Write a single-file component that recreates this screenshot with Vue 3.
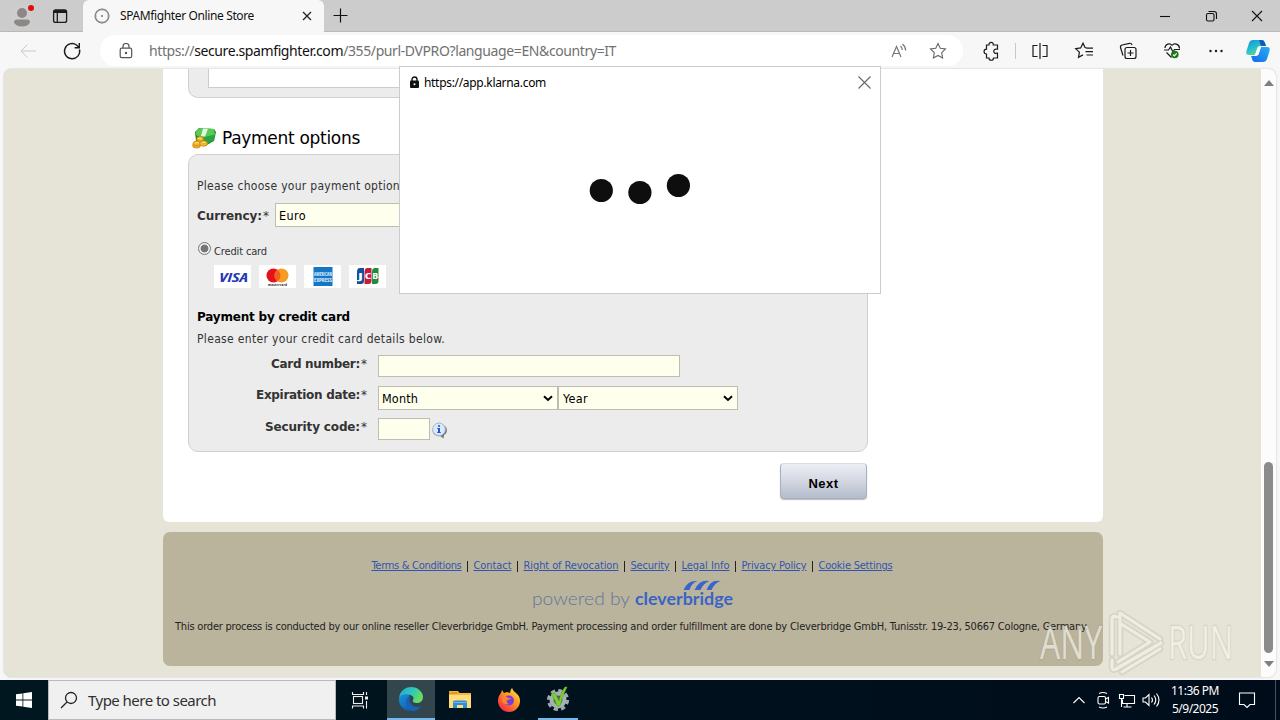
<script setup>
// Spreads a label over a fixed advance width (px) by adjusting its letter spacing.
const vFit = {
  mounted(el, { value }) {
    const natural = el.getBoundingClientRect().width
    el.style.letterSpacing = (value - natural) / el.textContent.length + 'px'
  },
}
const links = [
  ['Terms & Conditions', 90],
  ['Contact', 38],
  ['Right of Revocation', 95],
  ['Security', 39],
  ['Legal Info', 48],
  ['Privacy Policy', 65],
  ['Cookie Settings', 74],
]
</script>

<template>
  <div class="desktop">
    <header class="tabs">
      <div class="profile">
        <svg width="44" height="32" viewBox="0 0 44 32">
          <circle cx="22" cy="17" r="11" fill="#d0cecd" />
          <circle cx="22" cy="13" r="5" fill="#8b8887" />
          <path d="M14 22.500q0-3 3-3h10q3 0 3 3-2 4-8 4t-8-4z" fill="#8b8887" />
          <circle cx="31" cy="8" r="3" fill="#e00b0b" />
        </svg>
      </div>
      <svg class="tabact" width="32" height="32" viewBox="0 0 32 32" fill="none" stroke="#1b1b1b" stroke-width="1.300">
        <rect x="9.600" y="10" width="13" height="12.400" rx="2" />
        <path d="M10 11.500h12.500" stroke-width="3" /><path d="M13.300 12v10" />
      </svg>
      <div class="tab">
        <svg width="18" height="18" viewBox="0 0 18 18" fill="none">
          <circle cx="9" cy="9" r="6.800" stroke="#858585" stroke-width="1.500" />
          <path d="M9 1v3M9 14v3M1 9h3M14 9h3" stroke="#aaa" /><circle cx="9" cy="9" r=".9" fill="#666" />
        </svg>
        <span class="title"><span v-fit="134" class="t">SPAMfighter Online Store</span></span>
        <svg class="x" width="10" height="10" viewBox="0 0 10 10" stroke="#222" stroke-width="1.300"><path d="M1 1l8 8M9 1l-8 8" /></svg>
      </div>
      <svg class="plus" width="32" height="32" viewBox="0 0 32 32" stroke="#111" stroke-width="1.200"><path d="M9.500 15.500h14M16.500 8.500v14" /></svg>
      <div class="win">
        <svg viewBox="0 0 46 32"><path d="M18 16.500h10" /></svg>
        <svg viewBox="0 0 46 32"><rect x="18.500" y="13.500" width="7.500" height="7.500" rx="1.500" /><path d="M20.500 11.500h5.500q2.500 0 2.500 2.500v5" /></svg>
        <svg viewBox="0 0 46 32"><path d="M18 11l10 10M28 11l-10 10" /></svg>
      </div>
    </header>

    <nav class="bar">
      <div class="navbtns">
        <svg width="18" height="18" viewBox="0 0 18 18" stroke="#c9c9c9"><path d="M17 9H2M8.500 2.500L2 9l6.500 6.500" /></svg>
        <svg width="20" height="20" viewBox="0 0 20 20" stroke="#1b1b1b" stroke-width="1.400"><path d="M17.500 8.500A7.600 7.600 0 1 1 14.500 4L17 6.500M17.300 2v4.700h-4.700" /></svg>
      </div>
      <div class="address">
        <svg width="14" height="16" viewBox="0 0 14 16" stroke="#555" stroke-width="1.200"><rect x="1.200" y="5.200" width="11.500" height="9.500" rx="1.500" /><path d="M4 5V3.500a3 3 0 0 1 6 0V5" /><circle cx="7" cy="10" r=".6" fill="#555" /></svg>
        <span class="url"><span v-fit="467" class="t">https://<b>secure.spamfighter.com</b>/355/purl-DVPRO?language=EN&amp;country=IT</span></span>
        <svg width="18" height="18" viewBox="0 0 18 18" stroke="#777" stroke-width="1.200"><path d="M2 15L6.500 4.500 11 15M3.600 11.500h6M10.500 4q1.700 1.500 1.800 4M12.500 2q3 2.500 3.200 6.500" /></svg>
        <svg class="fav" width="18" height="18" viewBox="0 0 18 18" stroke="#666" stroke-width="1.100"><path d="M9 1.500l2.300 4.800 5.200.7-3.800 3.700.9 5.300L9 13.500 4.400 16l.9-5.300L1.500 7l5.200-.7z" /></svg>
      </div>
      <div class="tools">
        <svg viewBox="0 0 44 36"><path d="M17.500 12H20a2.200 2.200 0 1 1 4.300 0H28.500v4.200h-1a2.100 2.100 0 1 0 0 4h1V25H24.500a2.200 2.200 0 0 1-4.500 0H17.500v-4a2.400 2.400 0 1 1 0-4.900z" /></svg>
        <i class="sep"></i>
        <svg viewBox="0 0 44 36"><path d="M19.500 12.500H15v11h4.500M24.500 12.500H29v11h-4.500M22 10v16" /></svg>
        <svg viewBox="0 0 44 36"><path d="M24.500 14.800l-1.500-.3-2-4.300-2.300 4.700-5 .7 3.700 3.500-.9 5.200 4.500-2.400M24.500 15.200h6.500M23.500 18.600H31M24.500 22h6.500" /></svg>
        <svg viewBox="0 0 44 36"><rect x="19" y="14.500" width="11" height="11" rx="2" /><path d="M24.500 17v6M21.500 20h6M17 22.500l-2.500-8q-.4-2 1.500-2.500l7.500-1.700q2-.3 2.500 1.700" /></svg>
        <svg viewBox="0 0 44 36"><path d="M21.500 24.500l-5-5M22 12.500c-2-3-7-1.500-7 2.500M22 12.500c2-3 7.500-1.500 7.500 3M14 17h4.500l2-3 2.500 5 1.500-2.500h5.500" /><circle cx="24.800" cy="21.500" r="3.800" fill="#187a1c" stroke="none" /><path d="M23.100 21.700l1.200 1.200 2.400-2.500" stroke="#fff" /></svg>
        <svg viewBox="0 0 44 36"><g fill="#1b1b1b" stroke="none"><circle cx="16.500" cy="18" r="1.200" /><circle cx="22" cy="18" r="1.200" /><circle cx="27.500" cy="18" r="1.200" /></g></svg>
        <svg class="cop" viewBox="0 0 24 24">
          <defs>
            <linearGradient id="ca" x1="0" y1="0" x2=".6" y2="1"><stop offset="0" stop-color="#128fdf" /><stop offset=".6" stop-color="#25c5c8" /><stop offset="1" stop-color="#71d78b" /></linearGradient>
            <linearGradient id="cb" x1="1" y1="0" x2="0" y2="1"><stop offset="0" stop-color="#28aff0" /><stop offset="1" stop-color="#1568ed" /></linearGradient>
          </defs>
          <path d="M7 1h9q2 0 3 3l1 3h-6q-2 0-2.700 2L9 16H3q-3.500 0-2.500-4L3 4q1-3 4-3z" fill="url(#ca)" stroke="none" />
          <path d="M17 23H8.500q-1.800 0-2.500-3l-.8-3H10q2 0 2.700-2L15 8h6q3.500 0 2.500 4L21 20q-1 3-4 3z" fill="url(#cb)" stroke="none" />
          <path d="M13 1h3q2 0 3 3l1 3h-5z" fill="#1757b8" stroke="none" />
          <path d="M12 8h3l-3 8H9z" fill="#fff" stroke="none" />
        </svg>
      </div>
    </nav>

    <main class="view">
      <div class="page">
        <section class="sheet">
          <div class="prev"><div></div></div>
          <h2>
            <svg width="26" height="24" viewBox="0 0 26 24">
              <path d="M4 6l4-4 15 1 2 3-2 9-9 5-9-5z" fill="#17852c" /><path d="M5 5l4-3 14 1 1 6-13 3-6-3z" fill="#58cb55" /><path d="M12 2.500l5 .3-3 7.700-4-.5z" fill="#e7f7df" /><path d="M12 11.500l12-3-1 6-9 4z" fill="#27a443" />
              <g fill="#efb52c" stroke="#c5830e" stroke-width=".7"><ellipse cx="5.500" cy="19.500" rx="4" ry="2.600" /><ellipse cx="6" cy="17.500" rx="4" ry="2.400" /><ellipse cx="12.500" cy="17.500" rx="4" ry="2.800" /><ellipse cx="9" cy="13" rx="3.500" ry="2.400" /></g>
              <path d="M4 17q2-1 4 0M11 16.500q2-1 3.500 0M7.500 12.500q1.500-.8 3 0" stroke="#ffe785" fill="none" />
            </svg>
            <span v-fit="138" class="t">Payment options</span>
          </h2>
          <div class="panel">
            <p class="choose"><span v-fit="203" class="t">Please choose your payment option</span></p>
            <div class="cur"><b class="lab"><span v-fit="65" class="t">Currency:</span><em>*</em></b><div class="field sel"><span v-fit="27" class="t">Euro</span></div></div>
            <div class="radio"><i></i><span v-fit="53" class="t">Credit card</span></div>
            <div class="cards">
              <svg viewBox="0 0 37 23"><text x="5" y="17" font-size="13" font-weight="700" font-style="italic" fill="#2338b4" textLength="29" lengthAdjust="spacingAndGlyphs">VISA</text></svg>
              <svg viewBox="0 0 37 23"><circle cx="14.500" cy="10.500" r="7" fill="#e5121e" /><circle cx="22.500" cy="10.500" r="7" fill="#f69b25" /><path d="M18.500 4.800a7 7 0 0 1 0 11.400 7 7 0 0 1 0-11.400z" fill="#f4601c" /><text x="9" y="20.500" font-size="4" font-weight="700" fill="#333" textLength="19">mastercard</text></svg>
              <svg viewBox="0 0 37 23"><rect x="9.500" y="2" width="19" height="19" fill="#1576c5" /><g fill="#dcecf9" font-size="5" font-weight="700"><text x="10" y="11" textLength="18" lengthAdjust="spacingAndGlyphs">AMERICAN</text><text x="10" y="16.500" textLength="18" lengthAdjust="spacingAndGlyphs">EXPRESS</text></g></svg>
              <svg viewBox="0 0 37 23"><path d="M8 7q0-4 3-4h4v13q0 3-3 3H8z" fill="#174e99" /><path d="M15.500 7q0-4 3-4h4v13q0 3-3 3h-4z" fill="#c71b3d" /><path d="M23 7q0-4 3-4h3.500v13q0 3-3 3H23z" fill="#238b3d" /><g fill="#fff" font-size="9" font-weight="700"><text x="9" y="14.300" textLength="5" lengthAdjust="spacingAndGlyphs">J</text><text x="15.700" y="14.300" textLength="6.500" lengthAdjust="spacingAndGlyphs">C</text><text x="23.300" y="14.300" textLength="6" lengthAdjust="spacingAndGlyphs">B</text></g></svg>
            </div>
            <p class="by"><b><span v-fit="153" class="t">Payment by credit card</span></b></p>
            <p class="enter"><span v-fit="248" class="t">Please enter your credit card details below.</span></p>
            <div class="row r1"><b class="lab"><span v-fit="89" class="t">Card number:</span><em>*</em></b><div class="field num"></div></div>
            <div class="row r2"><b class="lab"><span v-fit="104" class="t">Expiration date:</span><em>*</em></b>
              <div class="field sel"><span v-fit="36" class="t">Month</span><svg width="10" height="7" viewBox="0 0 10 7"><path d="M1 1.300l4 3.700 4-3.700" /></svg></div>
              <div class="field sel year"><span v-fit="25" class="t">Year</span><svg width="10" height="7" viewBox="0 0 10 7"><path d="M1 1.300l4 3.700 4-3.700" /></svg></div>
            </div>
            <div class="row r3"><b class="lab"><span v-fit="95" class="t">Security code:</span><em>*</em></b><div class="field cvc"></div>
              <svg class="info" width="16" height="17" viewBox="0 0 16 17"><path d="M8.500 2.500a6 6 0 0 1 6.500 6q0 3-3 4.700L11.500 16.500 8 14a6 6 0 1 1 .5-11.500z" fill="#75767c" /><circle cx="7" cy="7.300" r="6.300" fill="#dce7f8" stroke="#a6b5ce" /><g fill="#1960c4"><circle cx="7" cy="4" r="1.100" /><path d="M5 6h3v4.300h1V11H5v-.7h1V6.800H5z" /></g></svg>
            </div>
          </div>
          <button><span v-fit="30" class="t">Next</span></button>
        </section>
        <footer>
          <div class="links"><template v-for="(l, i) in links" :key="l[0]"><i v-if="i"></i><a><span v-fit="l[1]" class="t">{{ l[0] }}</span></a></template></div>
          <svg class="logo" width="204" height="34" viewBox="0 0 204 34">
            <text x="1" y="27" font-size="18" font-weight="300" fill="#60769f" textLength="98" lengthAdjust="spacingAndGlyphs">powered by</text>
            <text x="104" y="27" font-size="17" font-weight="700" fill="#3964c5" textLength="98" lengthAdjust="spacingAndGlyphs">cleverbridge</text>
            <g fill="#3963cd"><path d="M152.500 12q4-10 14-9-6 2-8 9z" /><path d="M163.500 12q5-11 15-9-6 2-9 9z" /><path d="M175.500 12q4-11 14-9-6 2-9 9z" /></g><path d="M188 3q7 0 8 7-3-5-8-7z" fill="#aeb0aa" />
          </svg>
          <p><span v-fit="913" class="t">This order process is conducted by our online reseller Cleverbridge GmbH. Payment processing and order fulfillment are done by Cleverbridge GmbH, Tunisstr. 19-23, 50667 Cologne, Germany.</span></p>
        </footer>
      </div>
      <div class="scroll">
        <svg width="10" height="6" viewBox="0 0 10 6"><path d="M0 6l5-6 5 6z" /></svg>
        <div class="thumb"></div>
        <svg width="10" height="6" viewBox="0 0 10 6"><path d="M0 0l5 6 5-6z" /></svg>
      </div>
    </main>

    <section class="popup">
      <div class="phead">
        <svg width="11" height="13" viewBox="0 0 11 13"><rect x="1" y="4.500" width="9" height="7.500" rx="1" fill="#111" /><path d="M3 5V3.500a2.500 2.500 0 0 1 5 0V5" fill="none" stroke="#111" stroke-width="1.400" /><circle cx="5.500" cy="8.200" r="1" fill="#fff" /></svg>
        <span v-fit="122" class="t">https://app.klarna.com</span>
        <svg class="x" width="13" height="13" viewBox="0 0 13 13" stroke="#666" stroke-width="1.100"><path d="M.5.5l12 12M12.500.5l-12 12" /></svg>
      </div>
      <svg class="dots" width="104" height="34" viewBox="0 0 104 34" fill="#0e0e0f"><circle cx="13.300" cy="18.500" r="11.600" /><circle cx="51.900" cy="20.500" r="11.600" /><circle cx="90.400" cy="13.500" r="11.600" /></svg>
    </section>

    <svg class="mark" width="210" height="70" viewBox="0 0 210 70">
      <g font-size="45" font-weight="400" stroke-linejoin="round">
        <g fill="none" stroke="#8b8977" stroke-opacity=".16" stroke-width="3">
          <text x="3" y="52" textLength="62" lengthAdjust="spacingAndGlyphs">ANY</text><text x="131" y="52" textLength="65" lengthAdjust="spacingAndGlyphs">RUN</text>
        </g>
        <g fill="#fffef5" fill-opacity=".6">
          <text x="3" y="52" textLength="62" lengthAdjust="spacingAndGlyphs">ANY</text><text x="131" y="52" textLength="65" lengthAdjust="spacingAndGlyphs">RUN</text>
        </g>
      </g>
      <g fill="none" stroke-linecap="round" stroke-linejoin="round"><path d="M75 47V12q0-4 5-2M83 47V6l40 26M75 53v7q0 4 4 2l45-26M85 65l38-23M84 17l29 18-32 20" stroke="#98947e" stroke-opacity=".2" stroke-width="6.500" /><path d="M75 47V12q0-4 5-2M83 47V6l40 26M75 53v7q0 4 4 2l45-26M85 65l38-23M84 17l29 18-32 20" stroke="#fffef5" stroke-opacity=".6" stroke-width="3.200" /></g>
    </svg>

    <div class="taskbar">
      <div class="start"><svg width="16" height="16" viewBox="0 0 16 16" fill="#fff"><path d="M0 2.300l6.500-.9v6.200H0zM7.300 1.200L16 0v7.600H7.300zM0 8.400h6.500v6.200L0 13.700zM7.300 8.400H16V16l-8.700-1.200z" /></svg></div>
      <div class="search"><svg width="18" height="18" viewBox="0 0 18 18" fill="none" stroke="#222" stroke-width="1.300"><circle cx="11" cy="7" r="5.500" /><path d="M7 11l-6 6" /></svg><span v-fit="128" class="t">Type here to search</span></div>
      <div class="app view-btn"><svg width="18" height="18" viewBox="0 0 18 18" fill="none" stroke="#eee" stroke-width="1.100"><rect x="2.500" y="5.500" width="9" height="7" /><path d="M1.500 1v2.500h11V1M1.500 17.500V15h11v2.500M15.500 1v3M15.500 10v7.500" /><path d="M14 7h3" stroke-width="3" /></svg></div>
      <div class="app edge"><svg width="26" height="26" viewBox="0 0 26 26">
        <defs><linearGradient id="ea" x1="0" y1="0" x2="1" y2=".4"><stop offset="0" stop-color="#20a7dc" /><stop offset=".6" stop-color="#32c8b8" /><stop offset="1" stop-color="#68dc60" /></linearGradient><linearGradient id="eb" x1="0" y1="0" x2="1" y2="1"><stop offset="0" stop-color="#1a91dc" /><stop offset="1" stop-color="#0e4b9e" /></linearGradient></defs>
        <path d="M1 12C2 5 7 1 13 1c7 0 12 5 12 10 0 4-3 6-6 6s-5-1-4-3c2-3-2-6-6-5-4 0-7 1-8 3z" fill="url(#ea)" /><path d="M1 12c2-4 8-5 11-2-4 2-3 10 3 11 3 1 6 0 8-1-3 4-6 5-10 5C6 25 0 19 1 12z" fill="url(#eb)" /><path d="M12 10c-6 2-5 12 2 15 4 0 7-2 9-5-4 2-8 1-10-2-2-2-2-5-1-8z" fill="#1662b5" />
      </svg></div>
      <div class="app"><svg width="24" height="22" viewBox="0 0 24 22"><path d="M1 2h9l1.500 2H23v15H1z" fill="#f4b73f" /><path d="M1 6h22v13H1z" fill="#ffdc78" /><path d="M1 3h9v2H1z" fill="#e29a26" /><path d="M5 19v-6q0-1.500 2-1.500h10q2 0 2 1.500v6h-4v-3H9v3z" fill="#2f8ed5" /><path d="M5.500 13h13v1h-13z" fill="#70b6e8" /></svg></div>
      <div class="app"><svg width="24" height="24" viewBox="0 0 24 24">
        <defs><linearGradient id="fa" x1="1" y1="0" x2=".2" y2="1"><stop offset="0" stop-color="#fff14a" /><stop offset=".45" stop-color="#ff9a20" /><stop offset="1" stop-color="#f2224e" /></linearGradient></defs>
        <path d="M4 5l1-3 2 3 3-1 3 1q0-3 2-5 1 3 4 5 4 3 4 8a11 11 0 0 1-22 0q0-5 3-8z" fill="url(#fa)" /><circle cx="12" cy="12.500" r="5" fill="#773edb" /><path d="M5 9q4-2 6 1h3q-1 2-4 2-1 3 2 4-5 1-7-3z" fill="#ff832a" />
      </svg></div>
      <div class="app last"><svg width="24" height="26" viewBox="0 0 24 26"><circle cx="12" cy="14" r="9.600" fill="none" stroke="#9daaaf" stroke-width="3" stroke-dasharray="4.300 3.240" /><circle cx="12" cy="14" r="6.500" fill="#4c6064" stroke="#a7b2b4" stroke-width="4" /><path d="M5 8l4-1 4 8q2-9 6-14h2q-5 9-7 19h-3Q9 13 5 8z" fill="#7ed02d" stroke="#5aa420" stroke-width=".6" /></svg></div>
      <div class="tray">
        <svg viewBox="0 0 24 24"><path d="M6.500 15l5.500-5.500 5.500 5.500" /></svg>
        <svg viewBox="0 0 24 24"><rect x="7" y="8.500" width="7.500" height="7.500" rx="1.500" /><path d="M14.500 11l3-1.500v5.500l-3-1.500M8 5.500q4-2 8 0M8 19q4 2 8 0" /></svg>
        <svg viewBox="0 0 24 24"><path d="M9.500 7.500h10v8h-12v-4M12 15.500v3.500M8.500 19h8M4.500 6.500h4v4h-4zM6.500 10.500V19" /></svg>
        <svg viewBox="0 0 24 24"><path d="M4 10h2.500l3.500-3.500v11L6.500 14H4zM12.500 9.500q2 2.500 0 5M15 7.500q3.500 4.500 0 9M17.500 5.500q5 6.500 0 13" /></svg>
      </div>
      <div class="clock"><span v-fit="48" class="t">11:36 PM</span><span v-fit="46" class="t">5/9/2025</span></div>
      <svg class="note" width="18" height="18" viewBox="0 0 18 18" fill="none" stroke="#fff" stroke-width="1.100"><path d="M1.500 2h15v11.500H12l-3 3-3-3H1.500z" /></svg>
      <i class="show"></i>
    </div>
  </div>
</template>

<style scoped>
* { box-sizing: border-box; }
p, h2 { margin: 0; }
svg { flex: none; display: block; }
.t { display: inline-block; white-space: nowrap; }
.desktop { position: relative; width: 1280px; height: 720px; overflow: hidden; background: #f7f7f7; display: flex; flex-direction: column; font-family: "Noto Sans", "Open Sans", sans-serif; }
.tabs { height: 32px; display: flex; background: #ccc; box-shadow: inset 0 -1px #b9b9b9; flex: none; }
.tabact { margin-right: 7px; }
.tab { width: 241px; background: #f7f7f7; border-radius: 6px 6px 0 0; display: flex; align-items: center; padding: 0 12px 0 10px; }
.title { margin-left: 9px; width: 182px; font-size: 12px; color: #111; line-height: 32px; height: 32px; }
.win { margin-left: auto; display: flex; }
.win svg { width: 46px; height: 32px; fill: none; stroke: #111; stroke-width: 1.1; }
.bar { height: 37px; flex: none; display: flex; align-items: center; }
.bar svg { fill: none; }
.navbtns { display: flex; width: 100px; gap: 25px; padding-left: 19px; align-items: center; }
.address { width: 863px; height: 31px; border-radius: 16px; background: #fff; display: flex; align-items: center; padding-left: 19px; }
.url { width: 741px; margin-left: 16px; font-size: 14px; line-height: 30px; color: #717171; }
.url b { font-weight: 400; color: #111; }
.fav { margin-left: 21px; }
.tools { display: flex; align-items: center; margin-left: 6px; }
.tools svg { width: 44px; height: 36px; stroke: #1b1b1b; stroke-width: 1.2; }
.tools .sep { width: 1px; height: 16px; background: #c9c9c9; margin: 0 2px; }
.tools svg.cop { width: 24px; height: 24px; margin-left: 8px; }
.view { height: 608px; margin: 0 4px 3px; flex: none; display: flex; border-radius: 8px; overflow: hidden; background: #e6e4d6; box-shadow: 0 0 2px #bbb; }
.page { width: 1257px; padding-left: 159px; font-family: "DejaVu Sans Condensed", "DejaVu Sans", sans-serif; font-stretch: condensed; }
.sheet { width: 940px; height: 453px; background: #fff; border-radius: 0 0 6px 6px; padding-left: 25px; display: flex; flex-direction: column; }
.prev { width: 680px; height: 29px; border: 1px solid #d0d0d0; border-top: 0; border-radius: 0 0 10px 10px; background: #ececec; padding-left: 19px; flex: none; }
.prev div { width: 640px; height: 19px; background: #fff; border: 1px solid #ccc; border-top: 0; }
h2 { display: flex; align-items: center; height: 56px; padding: 24px 0 0 3px; gap: 5px; font-size: 17px; font-weight: 400; color: #000; font-family: "DejaVu Sans", sans-serif; font-stretch: normal; line-height: 30px; }
.panel { width: 680px; height: 298px; flex: none; border: 1px solid #d0d0d0; border-radius: 10px; background: #ececec; padding: 20px 0 0 8px; font-size: 12px; line-height: 22px; color: #333; }
.panel p { height: 20px; }
.lab { font-family: "DejaVu Sans", sans-serif; font-stretch: normal; font-size: 12px; }
.lab em { display: inline-block; width: 8px; padding-left: 1px; font-style: normal; font-weight: 400; text-align: left; }
.cur { display: flex; margin-top: 8px; height: 24px; line-height: 26px; }
.cur .lab { width: 78px; }
.field { background: #ffffee; border: 1px solid #bfbdb0; }
.sel { width: 180px; height: 24px; padding: 0 4px 0 3px; display: flex; justify-content: space-between; align-items: center; color: #000; line-height: 23px; font-size: 12.5px; }
.sel.year { padding-left: 4px; }
.sel svg { fill: none; stroke: #000; stroke-width: 2; }
.radio { display: flex; height: 20px; margin-top: 13px; gap: 3px; font-size: 11px; padding-left: 1px; }
.radio .t { line-height: 24px; }
.radio i { width: 13px; height: 13px; margin-top: 2px; border: 1px solid #767676; border-radius: 50%; background: radial-gradient(#767676 0 3.5px, #efefef 4.3px); }
.cards { display: flex; margin: 5px 0 0 17px; gap: 8px; height: 23px; }
.cards svg { width: 37px; height: 23px; background: #fff; font-family: "Open Sans", sans-serif; }
.by { margin-top: 18px; color: #000; font-family: "DejaVu Sans", sans-serif; font-stretch: normal; }
.enter { margin-top: 2px; }
.row { display: flex; }
.row .lab { width: 181px; padding-right: 10px; text-align: right; line-height: 19px; height: 18px; white-space: nowrap; }
.r1 { margin-top: 7px; height: 22px; }
.r2 { margin-top: 9px; height: 24px; }
.r3 { margin-top: 8px; height: 22px; }
.num { width: 302px; height: 22px; }
.cvc { width: 52px; height: 22px; }
.info { margin: 4px 0 0 2px; }
button { width: 87px; height: 36px; margin: 11px 0 0 592px; flex: none; border: 1px solid #a9b0bd; border-top-color: #d8dbe3; border-radius: 4px; background: linear-gradient(#eceef5, #d3d7e1 50%, #b2bccb); font: 700 13px "Liberation Sans", sans-serif; color: #000; padding: 4px 0 0; box-shadow: 0 1px 1px #bbb; }
footer { width: 940px; height: 134px; margin-top: 10px; background: #bbb49d; border-radius: 7px; padding: 23px 0 0; color: #222; font-size: 11px; }
.links { display: flex; justify-content: center; height: 20px; line-height: 18px; align-items: center; padding: 2px 2px 0 0; }
.links a { color: #3055b0; text-decoration: underline; }
.links a .t { text-decoration: underline; }
.links i { width: 1px; height: 11px; background: #222; margin: 0 5.5px; }
.logo { margin: 3px 0 0 368px; font-family: Lato, sans-serif; }
footer p { margin: 5px 0 0 12px; line-height: 20px; }
.scroll { width: 15px; background: #fcfcfc; display: flex; flex-direction: column; align-items: center; fill: #808080; padding-top: 11px; }
.thumb { width: 9px; height: 191px; border-radius: 5px; background: #8b8b8b; margin: 376px 0 8px; }
.popup { position: absolute; left: 399px; top: 66px; width: 482px; height: 228px; background: #fff; border: 1px solid #ccc; }
.phead { display: flex; align-items: center; height: 31px; padding: 0 9px 0 9px; font-size: 12px; color: #000; gap: 4px; line-height: 30px; }
.phead .x { margin-left: auto; }
.dots { margin: 74px 0 0 188px; }
.mark { position: absolute; left: 1037px; top: 607px; font-family: "Open Sans", Roboto, sans-serif; }
.taskbar { height: 40px; flex: none; background: linear-gradient(90deg, #001720, #000c1a); display: flex; align-items: center; color: #fff; }
.start { width: 48px; display: flex; justify-content: center; }
.search { width: 288px; height: 40px; border: 1px solid #b8b8be; background: #f0f0f0; display: flex; align-items: center; gap: 10px; padding-left: 11px; color: #303030; font-size: 15px; line-height: 38px; }
.app { width: 49px; height: 40px; display: flex; justify-content: center; align-items: center; }
.view-btn { padding-right: 2px; }
.edge { width: 48px; margin-left: 2px; background: #34464d; border-bottom: 2px solid #76b9ed; }
.last { width: 40px; margin-left: 5px; border-bottom: 2px solid #76b9ed; }
.tray { margin-left: auto; display: flex; }
.tray svg { width: 24px; height: 24px; fill: none; stroke: #fff; stroke-width: 1.1; }
.clock { width: 62px; display: flex; flex-direction: column; align-items: center; font-size: 12px; line-height: 18px; margin-left: 1px; }
.note { margin-left: 12px; }
.show { width: 1px; height: 40px; background: #46515c; margin: 0 4px 0 19px; }
</style>

<style>
body { overflow: hidden; }
</style>
